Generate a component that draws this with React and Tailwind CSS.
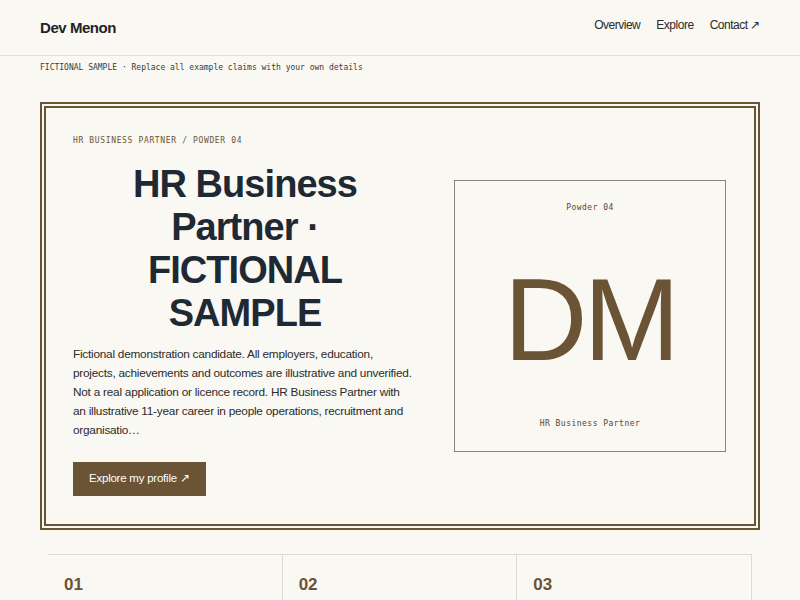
import React from 'react';

const sans = { fontFamily: '"Liberation Sans", Arial, sans-serif' };

const App = () => {
  return (
    <div className="min-h-screen w-full bg-[#f9f8f3] text-[#1f2328] font-['Liberation_Sans',Arial,sans-serif]">
      {/* header */}
      <header className="h-[56px] px-10 pt-[18px] flex justify-between items-start border-b border-[#e3e0d9]">
        <div className="text-[15px] leading-[20px] font-bold tracking-[-0.03em] text-[#1f2328]">Dev Menon</div>
        <nav className="flex gap-4 text-[12px] leading-[16px] tracking-[-0.04em] text-[#2a2a2a] -mt-[1px]">
          <a href="#overview">Overview</a>
          <a href="#explore">Explore</a>
          <a href="#contact">Contact ↗</a>
        </nav>
      </header>

      <p className="px-10 pt-[7px] text-[8px] leading-[10px] text-[#3a3a3a] font-['DejaVu_Sans_Mono',monospace]">
        FICTIONAL SAMPLE · Replace all example claims with your own details
      </p>

      {/* hero frame */}
      <section className="mx-10 mt-[29px] border-[6px] border-double border-[#6b5435] pl-[27px] pr-[28px] py-7">
        <div className="grid grid-cols-[344px_272px] justify-between items-center">
          <div>
            <p className="text-[8px] leading-[10px] tracking-[0.08em] text-[#6b5435] font-['DejaVu_Sans_Mono',monospace]">
              HR BUSINESS PARTNER / POWDER 04
            </p>
            <h1 className="mt-[17px] text-center text-[38px] leading-[43px] font-bold tracking-[-0.025em] text-[#1f2933]">
              HR Business Partner · FICTIONAL SAMPLE
            </h1>
            <p className="mt-[10px] max-w-[340px] text-[11.8px] leading-[19px] tracking-[-0.02em] text-[#2b2b2b]">
              Fictional demonstration candidate. All employers, education, projects, achievements and outcomes are illustrative and unverified. Not a real application or licence record. HR Business Partner with an illustrative 11-year career in people operations, recruitment and organisatio…
            </p>
            <a
              href="#profile"
              className="mt-[22px] inline-flex items-center h-[34px] px-4 bg-[#6b5435] text-white text-[11.5px] tracking-[-0.02em]"
            >
              Explore my profile ↗
            </a>
          </div>

          <div className="h-[272px] border border-[#8c8275] flex flex-col items-center justify-between pt-[22px] pb-[22px]">
            <p className="text-[8px] leading-[10px] tracking-[0.06em] text-[#5a4630] font-['DejaVu_Sans_Mono',monospace]">Powder 04</p>
            <div className="text-[116px] leading-none tracking-[-0.035em] text-[#6b5435] mt-[8px]" style={sans}>DM</div>
            <p className="text-[8px] leading-[10px] tracking-[0.06em] text-[#5a4630] font-['DejaVu_Sans_Mono',monospace]">HR Business Partner</p>
          </div>
        </div>
      </section>

      {/* cards */}
      <div className="mx-[48px] mt-6 grid grid-cols-3 w-[704px]">
        {['01', '02', '03'].map((n) => (
          <div key={n} className="border-t border-r border-[#dedbd3] px-4 pt-5 h-[60px]">
            <div className="text-[17px] leading-[20px] font-bold text-[#6b5435]">{n}</div>
          </div>
        ))}
      </div>
    </div>
  );
};

export default App;
